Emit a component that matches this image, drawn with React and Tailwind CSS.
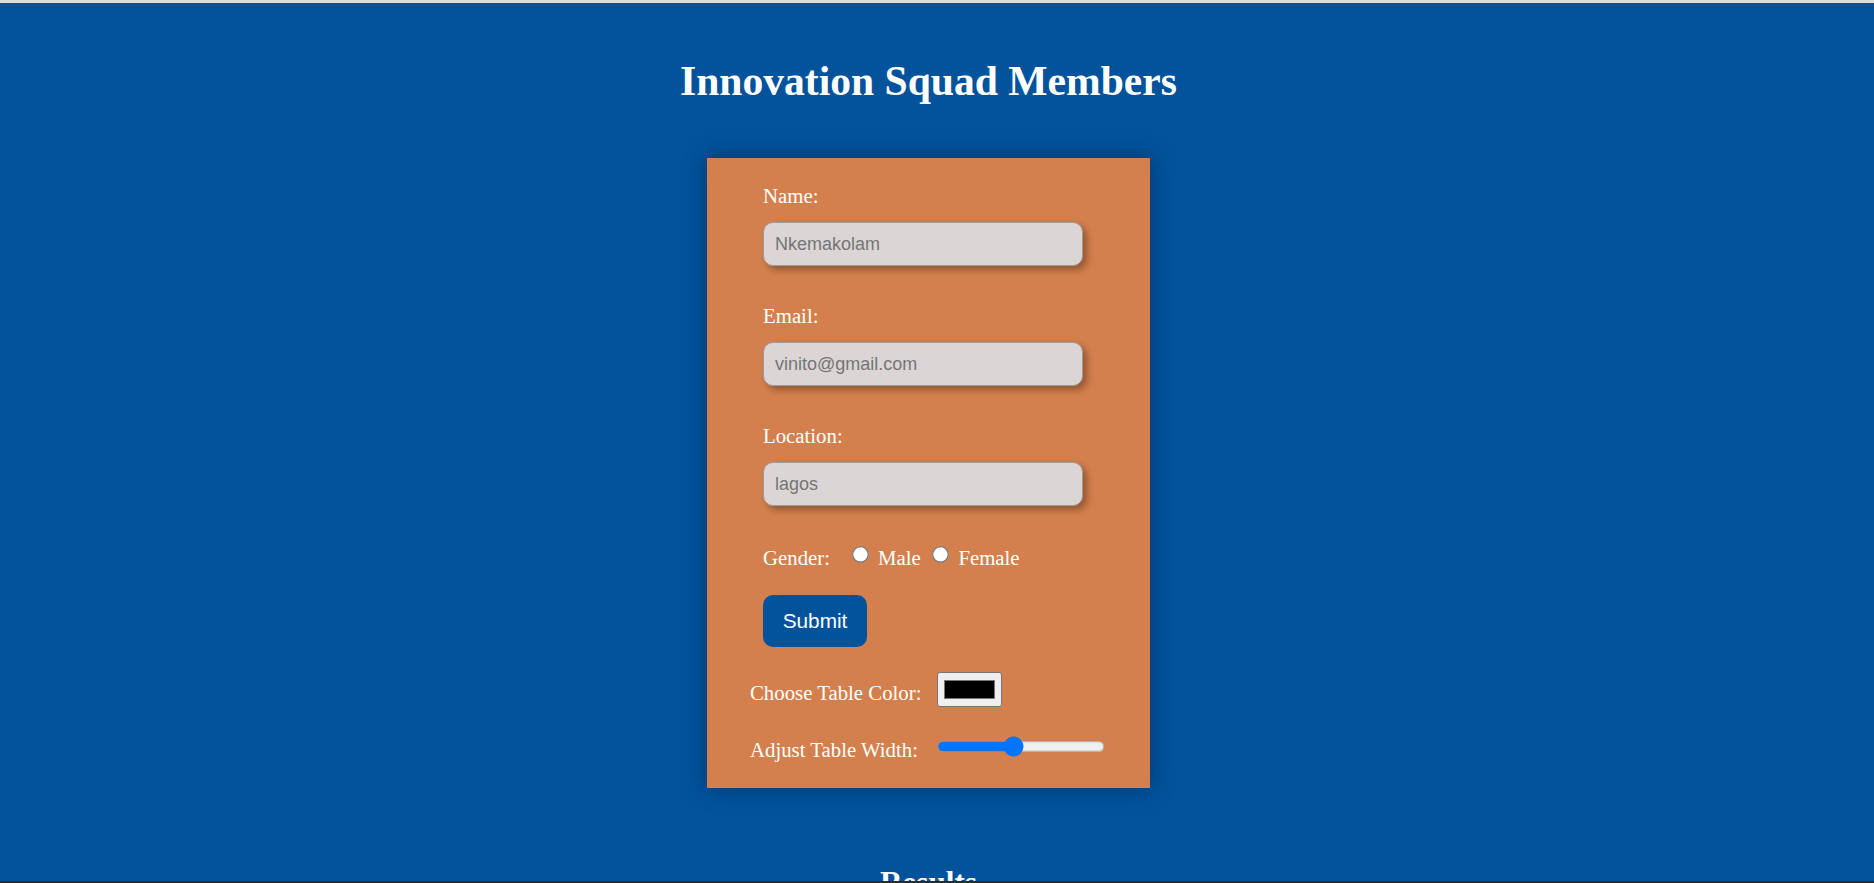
import React, { useState } from 'react';

const serif = "font-['Liberation_Serif','Times_New_Roman',serif]";
const sans = "font-['Liberation_Sans',Arial,sans-serif]";

const Field = ({ label, placeholder, type = 'text', first }) => (
  <div className={first ? 'flex flex-col' : 'flex flex-col mt-[38px]'}>
    <label className="text-[20.8px] leading-[24px] text-white">{label}</label>
    <input
      type={type}
      placeholder={placeholder}
      className={`${sans} mt-[14px] w-[320px] h-[44px] px-[11px] text-[18px] text-[#333] bg-[#dbd5d5] border border-[#a19c9c] rounded-[10px] shadow-[4px_4px_7px_rgba(70,35,15,0.45)] placeholder:text-[#757575] outline-none`}
    />
  </div>
);

const App = () => {
  const [gender, setGender] = useState('');
  const [width, setWidth] = useState(45);

  return (
    <div className={`${serif} h-[883px] flex flex-col overflow-hidden`}>
      <div className="h-[3px] bg-[#dedede] shrink-0" />
      <main className="flex-1 overflow-hidden bg-[#02539c] pr-[17px]">
        <div className="flex flex-col items-center">
          {/* Heading */}
          <h1 className="mt-[54px] text-[41.6px] leading-[48px] font-bold text-white">
            Innovation Squad Members
          </h1>

          {/* Form card */}
          <div className="mt-[53px] w-[443px] h-[630px] bg-[#d4804e] shadow-[0_0_22px_rgba(0,20,50,0.45)] pt-[26px] pl-[43px]">
            <form className="flex flex-col pl-[13px]" onSubmit={(e) => e.preventDefault()}>
              <Field label="Name:" placeholder="Nkemakolam" first />
              <Field label="Email:" placeholder="vinito@gmail.com" type="email" />
              <Field label="Location:" placeholder="lagos" />

              <div className="mt-[40px] flex items-center text-[20.8px] leading-[24px] text-white">
                <span className="mr-[22px]">Gender:</span>
                <input
                  type="radio"
                  name="gender"
                  checked={gender === 'male'}
                  onChange={() => setGender('male')}
                  className="[zoom:1.3] -mt-[6px] mr-[7px] bg-white"
                />
                <span>Male</span>
                <input
                  type="radio"
                  name="gender"
                  checked={gender === 'female'}
                  onChange={() => setGender('female')}
                  className="[zoom:1.3] -mt-[6px] ml-[9px] mr-[7px]"
                />
                <span>Female</span>
              </div>

              <button
                type="submit"
                className={`${sans} mt-[25px] w-[104px] h-[52px] rounded-[10px] bg-[#02539c] text-white text-[20.8px] cursor-pointer`}
              >
                Submit
              </button>
            </form>

            <div className="mt-[25px] flex items-center text-[20.8px] leading-[24px] text-white">
              <span className="w-[187px] mt-[6px]">Choose Table Color:</span>
              <span className="w-[65px] h-[35px] bg-[#efefef] border border-[#767676] rounded-[3px] flex px-[6px] py-[7px]">
                <span className="flex-1 bg-black border border-[#777]" />
              </span>
            </div>

            <div className="mt-[29px] flex items-center text-[20.8px] leading-[24px] text-white">
              <span className="w-[187px] mt-[2px]">Adjust Table Width:</span>
              <input
                type="range"
                min="0"
                max="100"
                value={width}
                onChange={(e) => setWidth(Number(e.target.value))}
                className="[zoom:1.3] -mt-[4px]"
              />
            </div>
          </div>

          <h2 className="mt-[77px] text-[31.2px] leading-[36px] font-bold text-white">Results</h2>
        </div>
      </main>
      <div className="h-[2px] bg-[#2b2b2b] shrink-0" />
    </div>
  );
};

export default App;
